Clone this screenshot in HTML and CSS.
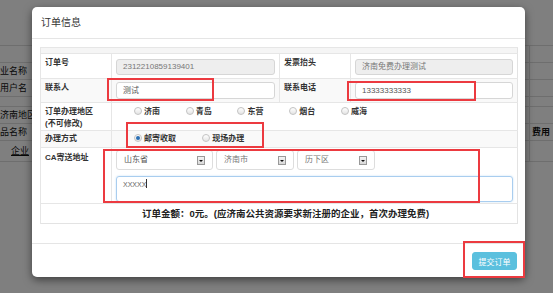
FILE: index.html
```html
<!DOCTYPE html>
<html lang="zh-CN">
<head>
    <meta charset="UTF-8">
    <title>订单信息</title>
    <link rel="stylesheet" href="styles.css">
</head>
<body>
    <!-- page behind the dialog -->
    <div class="page">
        <div class="prow prow-top"></div>
        <div class="prow"><span class="pleft"></span><span class="pright"></span></div>
        <div class="prow"><span class="pleft">业名称</span><span class="pright"></span></div>
        <div class="prow"><span class="pleft">用户名</span><span class="pright"></span></div>
        <div class="prow prow-thin"><span class="pleft"></span><span class="pright"></span></div>
        <div class="prow"><span class="pleft">济南地区</span><span class="pright"></span></div>
        <div class="prow"><span class="pleft">品名称</span><span class="pright pbold">费用</span></div>
        <div class="prow prow-tall"><span class="pleft plink">企业</span><span class="pright"></span></div>
    </div>

    <div class="backdrop"></div>

    <div class="modal">
        <div class="modal-header">订单信息</div>
        <div class="modal-body">
            <table class="order-table">
                <colgroup>
                    <col class="col-label">
                    <col class="col-value">
                    <col class="col-label2">
                    <col class="col-value2">
                </colgroup>
                <tr class="row-head"><td colspan="4"></td></tr>
                <tr class="row-order">
                    <th>订单号</th>
                    <td><div class="input disabled">2312210859139401</div></td>
                    <th>发票抬头</th>
                    <td><div class="input disabled">济南免费办理测试</div></td>
                </tr>
                <tr class="row-contact striped">
                    <th>联系人</th>
                    <td><div class="input">测试</div></td>
                    <th>联系电话</th>
                    <td><div class="input">13333333333</div></td>
                </tr>
                <tr class="row-area">
                    <th>订单办理地区<br>(不可修改)</th>
                    <td colspan="3" class="radios">
                        <span class="radio-item"><span class="radio"></span>济南</span>
                        <span class="radio-item"><span class="radio"></span>青岛</span>
                        <span class="radio-item"><span class="radio"></span>东营</span>
                        <span class="radio-item"><span class="radio"></span>烟台</span>
                        <span class="radio-item"><span class="radio"></span>威海</span>
                    </td>
                </tr>
                <tr class="row-way striped">
                    <th>办理方式</th>
                    <td colspan="3" class="radios">
                        <span class="radio-item wide"><span class="radio checked"></span>邮寄收取</span>
                        <span class="radio-item wide"><span class="radio"></span>现场办理</span>
                    </td>
                </tr>
                <tr class="row-address">
                    <th>CA寄送地址</th>
                    <td colspan="3">
                        <div class="selects">
                            <div class="select s-prov">山东省<span class="caret"></span></div>
                            <div class="select s-city">济南市<span class="caret"></span></div>
                            <div class="select s-dist">历下区<span class="caret"></span></div>
                        </div>
                        <div class="textarea">XXXXX<span class="cursor"></span></div>
                    </td>
                </tr>
                <tr class="row-amount">
                    <td colspan="4">订单金额：0元。(应济南公共资源要求新注册的企业，首次办理免费)</td>
                </tr>
            </table>
        </div>
        <div class="modal-footer">
            <button class="btn btn-info">提交订单</button>
        </div>

        <!-- red annotation boxes -->
        <div class="mark mark-contact"></div>
        <div class="mark mark-phone"></div>
        <div class="mark mark-way"></div>
        <div class="mark mark-address"></div>
        <div class="mark mark-submit"></div>
    </div>
</body>
</html>
```

FILE: styles.css
```css
body {
    margin: 0;
    width: 553px;
    height: 293px;
    overflow: hidden;
    position: relative;
    font-family: "Liberation Sans", "Noto Sans CJK SC", sans-serif;
    font-size: 8px;
    color: #333;
    background-color: #fff;
}

/* background page */
.page {
    width: 553px;
}
.prow {
    display: flex;
    height: 16px;
    line-height: 16px;
    border-bottom: 1px solid #ddd;
    font-size: 9px;
    color: #111;
}
.prow-top {
    height: 45px;
}
.prow-thin {
    height: 9px;
}
.prow-tall {
    height: 20px;
    line-height: 20px;
}
.pleft {
    width: 30px;
    text-align: right;
    padding-right: 4px;
    box-sizing: border-box;
    white-space: nowrap;
}
.plink {
    text-decoration: underline;
    text-align: left;
    padding-left: 11px;
}
.pright {
    margin-left: auto;
    width: 21px;
    border-left: 1px solid #ddd;
    padding-left: 2px;
    white-space: nowrap;
    overflow: hidden;
}
.pbold {
    font-weight: bold;
}

.backdrop {
    position: absolute;
    inset: 0;
    background-color: rgba(0, 0, 0, 0.5);
}

/* dialog */
.modal {
    position: absolute;
    left: 32px;
    top: 7px;
    width: 493px;
    height: 270px;
    background-color: #fff;
    border-radius: 5px;
    box-shadow: 0 3px 9px rgba(0, 0, 0, 0.5);
}
.modal-header {
    height: 32px;
    line-height: 31px;
    padding-left: 9px;
    font-size: 10px;
    color: #333;
    border-bottom: 1px solid #e5e5e5;
    box-sizing: border-box;
}
.modal-body {
    padding: 8px 8px 19px;
}
.modal-footer {
    border-top: 1px solid #e5e5e5;
    padding: 8px 8px 0;
    text-align: right;
}

.order-table {
    width: 477px;
    table-layout: fixed;
    border-collapse: collapse;
    border: 1px solid #e3e3e3;
}
.col-label { width: 71px; }
.col-value { width: 168px; }
.col-label2 { width: 71px; }
.col-value2 { width: 167px; }

.order-table th,
.order-table td {
    border-top: 1px solid #e6e6e6;
    border-left: 1px solid #e6e6e6;
    vertical-align: top;
    padding: 0 4px;
    line-height: 12px;
}
.order-table th {
    text-align: left;
    font-weight: bold;
    color: #333;
}
.row-head td {
    height: 5px;
    padding: 0;
    background-color: #f5f5f5;
}
.striped th,
.striped td {
    background-color: #f9f9f9;
}

.row-order th { height: 25px; padding-top: 3px; box-sizing: border-box; }
.row-order td { padding-top: 5px; }
.row-contact th { height: 24px; padding-top: 3px; box-sizing: border-box; }
.row-contact td { padding-top: 3px; }
.row-area th { height: 28px; padding-top: 3px; box-sizing: border-box; }
.row-area td { padding-top: 3px; }
.row-way th { height: 17px; padding-top: 2px; box-sizing: border-box; }
.row-way td { padding-top: 2px; }
.row-address th { height: 56px; padding-top: 4px; box-sizing: border-box; }
.row-address td { padding-top: 2px; }
.row-amount td {
    height: 19px;
    text-align: center;
    font-weight: bold;
    font-size: 9.5px;
    line-height: 19px;
    padding-left: 17px;
    color: #222;
}

.input {
    height: 16px;
    box-sizing: border-box;
    border: 1px solid #d6d6d6;
    border-radius: 3px;
    padding: 0 6px;
    line-height: 14px;
    color: #555;
    background-color: #fff;
    white-space: nowrap;
    overflow: hidden;
}
.row-contact .input {
    height: 17px;
    line-height: 15px;
}
.input.disabled {
    background-color: #eee;
    color: #777;
}

.radios {
    padding-left: 22px !important;
    white-space: nowrap;
}
.radio-item {
    display: inline-block;
    width: 49.5px;
    color: #333;
    font-weight: bold;
}
.radio-item.wide {
    width: 66px;
}
.radio {
    display: inline-block;
    width: 6px;
    height: 6px;
    margin-right: 2px;
    border: 1px solid #c4c4c4;
    border-radius: 50%;
    background: linear-gradient(#fff, #e4e4e4);
    vertical-align: -1px;
    position: relative;
}
.radio.checked::after {
    content: "";
    position: absolute;
    left: 1px;
    top: 1px;
    width: 4px;
    height: 4px;
    border-radius: 50%;
    background-color: #2a6fb4;
}

.selects {
    display: flex;
    gap: 3px;
}
.select {
    height: 20px;
    box-sizing: border-box;
    border: 1px solid #ddd;
    border-radius: 3px;
    padding-left: 7px;
    line-height: 18px;
    color: #777;
    position: relative;
}
.s-prov { width: 97px; color: #555; }
.s-city { width: 78px; }
.s-dist { width: 78px; }
.caret {
    position: absolute;
    right: 7px;
    top: 5px;
    width: 6px;
    height: 7px;
    border: 1px solid #999;
    background: linear-gradient(#f4f4f4, #d8d8d8);
}
.caret::after {
    content: "";
    position: absolute;
    left: 1px;
    top: 3px;
    border-left: 2px solid transparent;
    border-right: 2px solid transparent;
    border-top: 2px solid #111;
}
.textarea {
    margin-top: 6px;
    height: 26px;
    box-sizing: border-box;
    border: 1px solid #a9cdef;
    border-radius: 3px;
    box-shadow: 0 0 2px rgba(102, 175, 233, 0.4);
    padding: 2px 6px;
    line-height: 12px;
    color: #666;
    font-size: 7px;
}
.cursor {
    display: inline-block;
    width: 1px;
    height: 9px;
    background-color: #333;
    vertical-align: -1px;
}

.btn {
    font-family: "Liberation Sans", "Noto Sans CJK SC", sans-serif;
    font-size: 8px;
    border: 1px solid transparent;
    border-radius: 3px;
    cursor: pointer;
}
.btn-info {
    width: 45px;
    height: 18px;
    padding: 0;
    color: #fff;
    background-color: #5bc0de;
    border-color: #5bc0de;
}

.mark {
    position: absolute;
    border: 2px solid #ec3a40;
    box-sizing: border-box;
}
.mark-contact { left: 75px; top: 71px; width: 107px; height: 23px; }
.mark-phone { left: 315px; top: 74px; width: 129px; height: 20px; }
.mark-way { left: 94px; top: 115px; width: 138px; height: 26px; }
.mark-address { left: 71px; top: 142px; width: 377px; height: 54px; }
.mark-submit { left: 431px; top: 234px; width: 62px; height: 37px; }
```
